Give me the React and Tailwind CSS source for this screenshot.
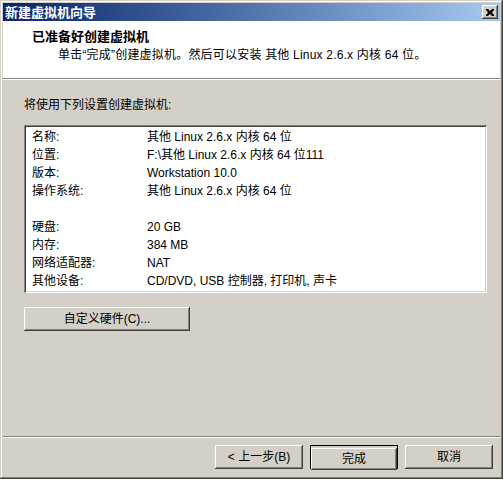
import React from "react";

const font = { fontFamily: '"Liberation Sans", "Noto Sans CJK SC", sans-serif' };

const rows = [
  ["名称:", "其他 Linux 2.6.x 内核 64 位"],
  ["位置:", "F:\\其他 Linux 2.6.x 内核 64 位111"],
  ["版本:", "Workstation 10.0"],
  ["操作系统:", "其他 Linux 2.6.x 内核 64 位"],
  ["", ""],
  ["硬盘:", "20 GB"],
  ["内存:", "384 MB"],
  ["网络适配器:", "NAT"],
  ["其他设备:", "CD/DVD, USB 控制器, 打印机, 声卡"],
];

function Button({ children, primary, className = "" }) {
  if (primary) {
    return (
      <div className={"border border-black " + className}>
        <button className="w-full h-full bg-[#d4d0c8] text-[12px] leading-none text-black shadow-[inset_-1px_-1px_#404040,inset_1px_1px_#fff,inset_-2px_-2px_#808080]">
          {children}
        </button>
      </div>
    );
  }
  return (
    <button
      className={
        "bg-[#d4d0c8] text-[12px] leading-none text-black shadow-[inset_-1px_-1px_#404040,inset_1px_1px_#fff,inset_-2px_-2px_#808080,inset_2px_2px_#d4d0c8] " +
        className
      }
    >
      {children}
    </button>
  );
}

export default function App() {
  return (
    <div
      style={font}
      className="w-[503px] h-[479px] bg-[#d4d0c8] p-[3px] flex flex-col text-black shadow-[inset_-1px_-1px_#404040,inset_1px_1px_#d4d0c8,inset_-2px_-2px_#808080,inset_2px_2px_#fff] select-none"
    >
      {/* title bar */}
      <div className="h-[18px] flex items-center justify-between bg-gradient-to-r from-[#0a246a] to-[#a6caf0] pl-[2px] pr-[2px]">
        <span className="text-white font-bold text-[13px] leading-[15px]">新建虚拟机向导</span>
        <div className="w-[16px] h-[14px] bg-[#d4d0c8] flex items-center justify-center shadow-[inset_-1px_-1px_#404040,inset_1px_1px_#fff,inset_-2px_-2px_#808080]">
          <svg width="8" height="7" viewBox="0 0 8 7">
            <path d="M0 0h2l2 2 2-2h2v1L6 3.5 8 6v1H6L4 5 2 7H0V6l2-2.5L0 1z" fill="#000" />
          </svg>
        </div>
      </div>

      {/* header */}
      <div className="h-[57px] bg-white pt-[8px]">
        <div className="pl-[29px] text-[13px] font-bold leading-[16px]">已准备好创建虚拟机</div>
        <div className="pl-[55px] mt-[2px] text-[12px] leading-[16px] tracking-[0.2px]">
          单击“完成”创建虚拟机。然后可以安装 其他 Linux 2.6.x 内核 64 位。
        </div>
      </div>
      <div className="h-[2px] border-t border-[#808080] border-b border-b-white" />

      {/* body */}
      <div className="flex-1 pl-[21px] pr-[13px] pt-[17px]">
        <div className="text-[12px] leading-[16px]">将使用下列设置创建虚拟机:</div>
        <div className="mt-[12px] h-[168px] bg-white pt-[3px] pl-[8px] shadow-[inset_1px_1px_#808080,inset_-1px_-1px_#fff,inset_2px_2px_#404040,inset_-2px_-2px_#d4d0c8]">
          {rows.map(([k, v], i) => (
            <div key={i} className="flex h-[18px] items-center text-[12px] leading-[18px]">
              <span className="w-[115px] shrink-0">{k}</span>
              <span className="whitespace-nowrap">{v}</span>
            </div>
          ))}
        </div>
        <Button className="mt-[14px] w-[166px] h-[24px]">自定义硬件(C)...</Button>
      </div>
      <div className="h-[2px] border-t border-[#808080] border-b border-b-white" />

      {/* footer */}
      <div className="h-[38px] flex justify-end gap-[7px] pt-[7px] pr-[7px]">
        <Button className="w-[88px] h-[24px]">&lt; 上一步(B)</Button>
        <Button primary className="w-[88px] h-[24px]">完成</Button>
        <Button className="w-[88px] h-[24px]">取消</Button>
      </div>
    </div>
  );
}
